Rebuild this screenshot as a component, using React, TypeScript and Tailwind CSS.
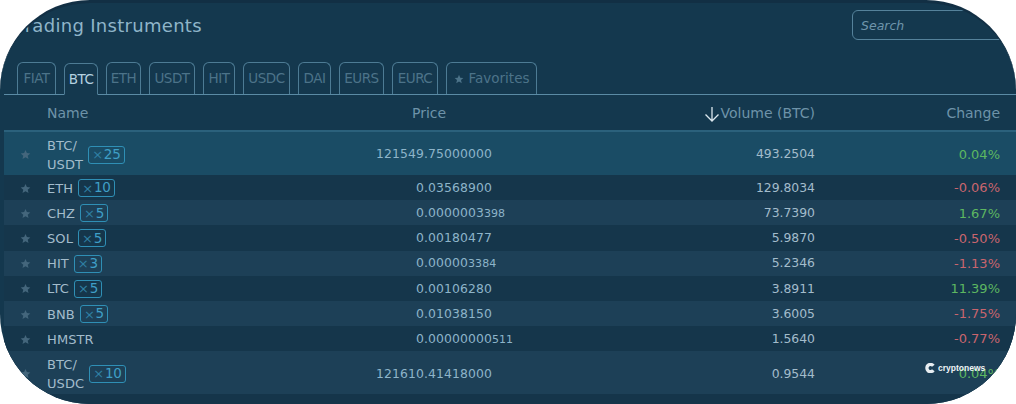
const font = "font-['DejaVu_Sans',sans-serif]";

const tabs = [
  { name: "FIAT", width: "w-[39px]" },
  { name: "BTC", width: "w-[34px]" },
  { name: "ETH", width: "w-[35px]" },
  { name: "USDT", width: "w-[46px]" },
  { name: "HIT", width: "w-[32px]" },
  { name: "USDC", width: "w-[47px]" },
  { name: "DAI", width: "w-[33px]" },
  { name: "EURS", width: "w-[45px]" },
  { name: "EURC", width: "w-[46px]" },
];

type Row = {
  base: string;
  quote?: string;
  lev?: number;
  whole: string;
  frac: string;
  small?: string;
  volume: string;
  change: string;
  up: boolean;
  tall?: boolean;
  bg: string;
};

const rows: Row[] = [
  { base: "BTC/", quote: "USDT", lev: 25, whole: "121549", frac: ".75000000", volume: "493.2504", change: "0.04%", up: true, tall: true, bg: "bg-[#1a4c65]" },
  { base: "ETH", lev: 10, whole: "0", frac: ".03568900", volume: "129.8034", change: "-0.06%", up: false, bg: "bg-[#15364b]" },
  { base: "CHZ", lev: 5, whole: "0", frac: ".0000003", small: "398", volume: "73.7390", change: "1.67%", up: true, bg: "bg-[#1d4057]" },
  { base: "SOL", lev: 5, whole: "0", frac: ".00180477", volume: "5.9870", change: "-0.50%", up: false, bg: "bg-[#15364b]" },
  { base: "HIT", lev: 3, whole: "0", frac: ".00000", small: "3384", volume: "5.2346", change: "-1.13%", up: false, bg: "bg-[#1d4057]" },
  { base: "LTC", lev: 5, whole: "0", frac: ".00106280", volume: "3.8911", change: "11.39%", up: true, bg: "bg-[#15364b]" },
  { base: "BNB", lev: 5, whole: "0", frac: ".01038150", volume: "3.6005", change: "-1.75%", up: false, bg: "bg-[#1d4057]" },
  { base: "HMSTR", whole: "0", frac: ".00000000", small: "511", volume: "1.5640", change: "-0.77%", up: false, bg: "bg-[#15364b]" },
  { base: "BTC/", quote: "USDC", lev: 10, whole: "121610", frac: ".41418000", volume: "0.9544", change: "0.04%", up: true, tall: true, bg: "bg-[#1d4057]" },
];

function Star({ className }: { className: string }) {
  return (
    <svg viewBox="0 0 24 24" className={className} fill="currentColor">
      <path d="M12 2l3 6.9 7.5.7-5.7 4.9 1.8 7.4L12 18l-6.6 3.9 1.8-7.4L1.500 9.600 9 8.900z" />
    </svg>
  );
}

function TableRow({ row }: { row: Row }) {
  return (
    <div className={`flex items-center text-[13px] ${row.bg} ${row.tall ? "h-[43px] pt-[2px]" : "h-[25.200px] pt-px"}`}>
      <div className="w-[43px] pl-[16px]">
        <Star className="w-[11px] h-[11px] text-[#44667c]" />
      </div>
      <div className="w-[294px] flex items-center text-[#a3bccb] tracking-[0.1px]">
        <div className="leading-[19px]">
          <div>{row.base}</div>
          {row.quote && <div>{row.quote}</div>}
        </div>
        {row.lev && (
          <span className="ml-[5px] h-[18px] px-[3px] flex items-center border border-[#2f8fb5] rounded-[3px] text-[#3f9fc6] text-[13.500px] leading-none tracking-[-0.2px]">
            <span className="text-[13px] mr-[1px] text-[#2f7fa3]">×</span>
            {row.lev}
          </span>
        )}
      </div>
      <div className="flex text-[#8db4c9] text-[12.400px] tracking-[0.1px]">
        <span className="w-[83px] text-right">{row.whole}</span>
        <span>
          {row.frac}
          {row.small && <span className="text-[11px]">{row.small}</span>}
        </span>
      </div>
      <div className="ml-auto w-[100px] text-right text-[#a3bccb] text-[12.400px]">{row.volume}</div>
      <div className={`w-[201px] pr-[16px] text-right text-[13px] ${row.up ? "text-[#5db761]" : "text-[#c9656e]"}`}>{row.change}</div>
    </div>
  );
}

export default function App() {
  return (
    <div className={`w-[1016px] h-[404px] bg-white ${font}`}>
      <div className="relative w-full h-full rounded-[90px] overflow-hidden bg-[#14384e] flex flex-col border-t-[3px] border-[#122f44]">
        {/* Title and search */}
        <div className="h-[59px] flex items-start justify-between pl-[16px] shrink-0">
          <h1 className="mt-[11px] text-[18px] leading-[24px] text-[#8fb5c9] tracking-[0.3px]">Trading Instruments</h1>
          <div className="mt-[7px] w-[165px] h-[30px] -mr-[1px] flex items-center pt-[2px] px-[8px] border border-[#55829b] rounded-[6px] text-[12.500px] italic text-[#6f95ab] shrink-0">
            Search
          </div>
        </div>

        {/* Tabs */}
        <div className="ml-[4px] h-[33px] flex items-end gap-[8px] pl-[13px] border-b border-[#5b8ba5] shrink-0">
          {tabs.map((tab) => (
            <div
              key={tab.name}
              className={`h-[32px] ${tab.width} flex items-center justify-center rounded-t-[6px] border border-[#4d7b94] text-[13.500px] tracking-[-0.5px] ${
                tab.name === "BTC" ? "text-[#b4d2e0] border-b-[#14384e] -mb-px" : "text-[#4c7389] border-b-0"
              }`}
            >
              {tab.name}
            </div>
          ))}
          <div className="h-[32px] w-[91px] flex items-center justify-center gap-[5px] rounded-t-[6px] border border-b-0 border-[#4d7b94] text-[13.500px] text-[#4c7389]">
            <Star className="w-[10px] h-[10px]" />
            Favorites
          </div>
        </div>

        {/* Header */}
        <div className="ml-[4px] h-[37px] flex items-center pt-[2px] border-b-2 border-[#2b617c] text-[14px] text-[#6e93a9] shrink-0">
          <div className="w-[43px]" />
          <div className="w-[365px]">Name</div>
          <div className="w-[80px]">Price</div>
          <div className="ml-auto w-[150px] flex items-center justify-end">
            <svg viewBox="0 0 16 16" className="w-[16px] h-[16px] text-[#dbe8ef]" fill="none" stroke="currentColor" strokeWidth="1.300">
              <path d="M8 1v14M1.500 8.500L8 15l6.500-6.500" />
            </svg>
            <span>Volume (BTC)</span>
          </div>
          <div className="w-[201px] pr-[16px] text-right">Change</div>
        </div>

        {/* Rows */}
        <div className="ml-[4px] flex-1 bg-[#15354a]">
          {rows.map((row, i) => (
            <TableRow key={i} row={row} />
          ))}
        </div>

        {/* Watermark */}
        <div className="absolute left-[925px] top-[359px] flex items-center gap-[3px] text-[#eef3f6] text-[8.500px] font-bold font-['Liberation_Sans',sans-serif]">
          <svg viewBox="0 0 12 12" className="w-[10px] h-[10px]" fill="none">
            <path d="M10 3.400A4.300 4.300 0 1 0 10 8.600" stroke="#e8eef2" strokeWidth="4" />
          </svg>
          cryptonews
        </div>
      </div>
    </div>
  );
}
